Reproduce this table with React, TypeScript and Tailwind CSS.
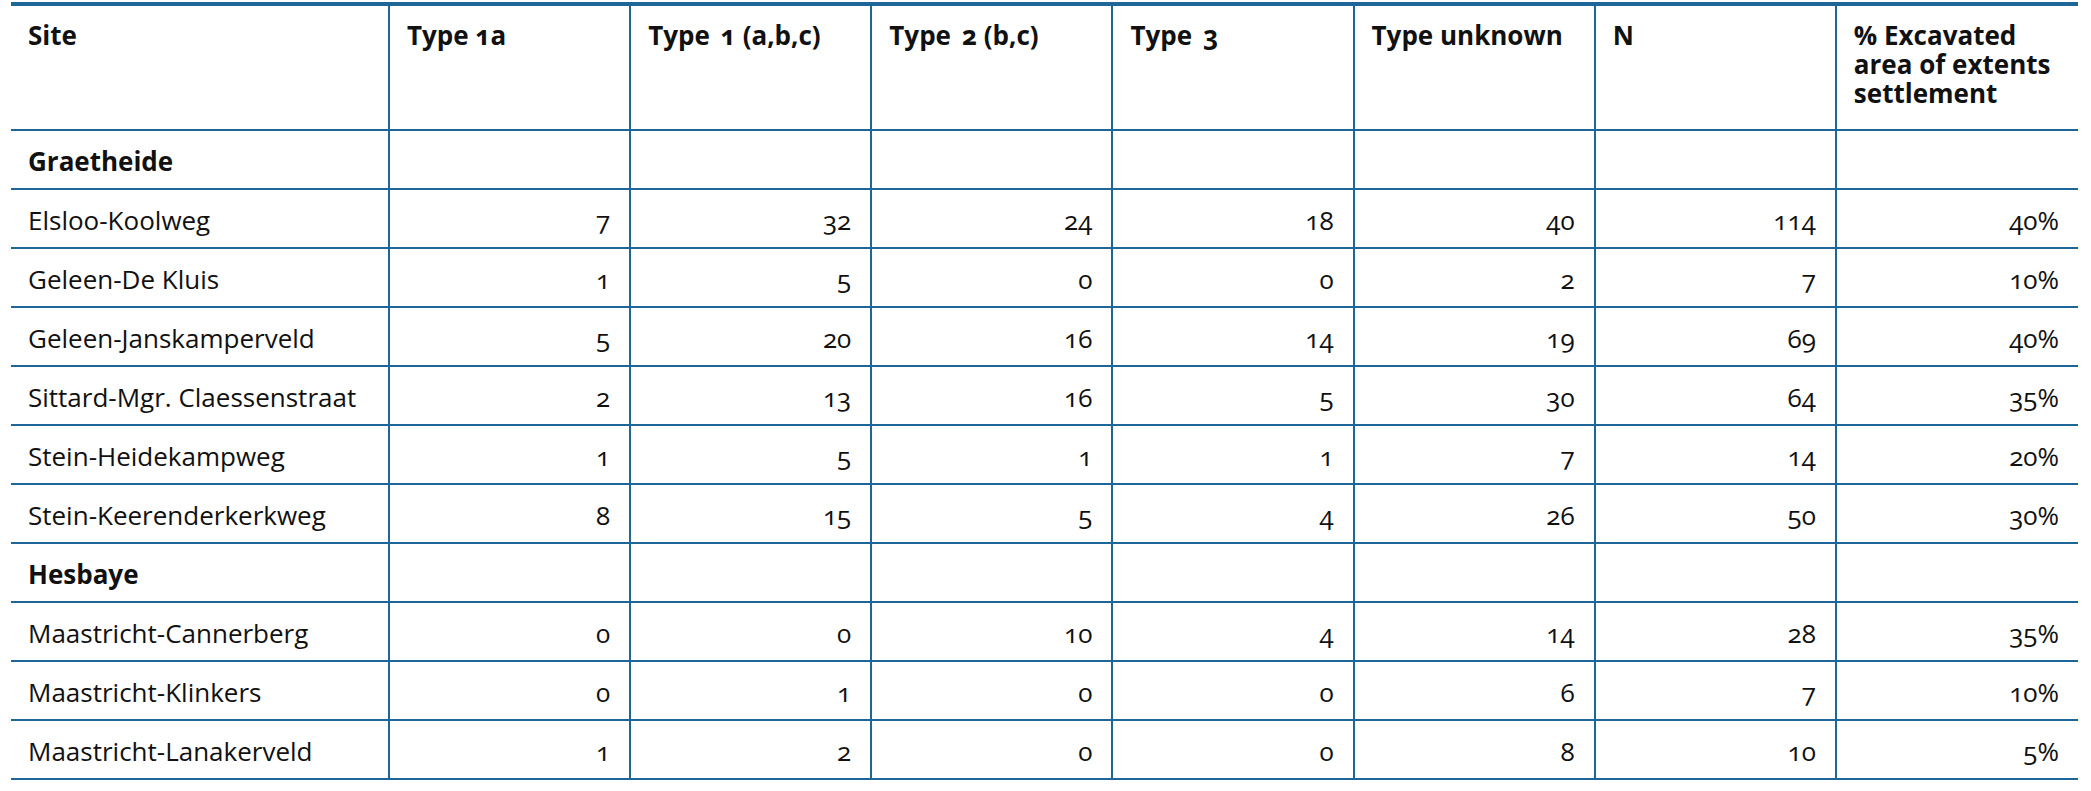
const headers = [
  "Site",
  "Type 1a",
  "Type\u2009 1 (a,b,c)",
  "Type\u2009 2 (b,c)",
  "Type\u2009 3",
  "Type unknown",
  "N",
  "% Excavated area of extents settlement",
];

type Row = { site: string; group?: boolean; values?: string[] };

const rows: Row[] = [
  { site: "Graetheide", group: true },
  { site: "Elsloo-Koolweg", values: ["7", "32", "24", "18", "40", "114", "40%"] },
  { site: "Geleen-De Kluis", values: ["1", "5", "0", "0", "2", "7", "10%"] },
  { site: "Geleen-Janskamperveld", values: ["5", "20", "16", "14", "19", "69", "40%"] },
  { site: "Sittard-Mgr. Claessenstraat", values: ["2", "13", "16", "5", "30", "64", "35%"] },
  { site: "Stein-Heidekampweg", values: ["1", "5", "1", "1", "7", "14", "20%"] },
  { site: "Stein-Keerenderkerkweg", values: ["8", "15", "5", "4", "26", "50", "30%"] },
  { site: "Hesbaye", group: true },
  { site: "Maastricht-Cannerberg", values: ["0", "0", "10", "4", "14", "28", "35%"] },
  { site: "Maastricht-Klinkers", values: ["0", "1", "0", "0", "6", "7", "10%"] },
  { site: "Maastricht-Lanakerveld", values: ["1", "2", "0", "0", "8", "10", "5%"] },
];

export default function App() {
  return (
    <div className="min-h-screen bg-white pt-[2px] pl-[11px]">
      <div
        className="grid w-[2067px] grid-cols-[379px_repeat(7,1fr)] border-t-4 border-[#1d6798] text-[26px] leading-[29px] text-[#111] oldstyle-nums"
        style={{ fontFamily: '"Open Sans", "Noto Sans", sans-serif' }}
      >
        {headers.map((h, i) => (
          <div
            key={i}
            className={
              "h-[125px] border-b-2 border-[#1d6798] px-[17px] pt-[15px] font-bold " +
              (i < headers.length - 1 ? "border-r-2" : "")
            }
          >
            {h}
          </div>
        ))}
        {rows.map((r) => (
          <Line key={r.site} row={r} />
        ))}
      </div>
    </div>
  );
}

function Line({ row }: { row: Row }) {
  const cells = row.values ?? ["", "", "", "", "", "", ""];
  return (
    <>
      <div
        className={
          "flex h-[59px] items-center border-b-2 border-r-2 border-[#1d6798] pl-[17px] pt-[3px] whitespace-nowrap " +
          (row.group ? "font-bold" : "")
        }
      >
        {row.site}
      </div>
      {cells.map((v, i) => (
        <div
          key={i}
          className={
            "flex h-[59px] items-center justify-end border-b-2 border-[#1d6798] pr-[19px] pt-[3px] " +
            (i < cells.length - 1 ? "border-r-2" : "")
          }
        >
          {v}
        </div>
      ))}
    </>
  );
}
